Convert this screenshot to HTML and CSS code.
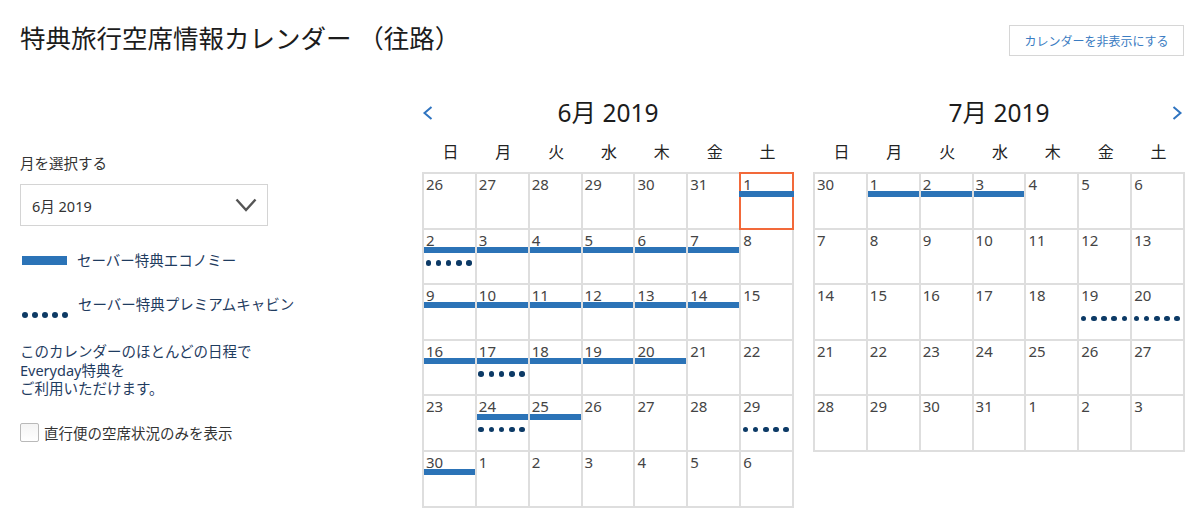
FILE: index.html
```html
<!DOCTYPE html>
<html lang="ja">
<head>
<meta charset="utf-8">
<title>特典旅行空席情報カレンダー</title>
<link rel="stylesheet" href="styles.css">
</head>
<body>
<div class="page">
  <header class="top">
    <h1 class="title">特典旅行空席情報カレンダー （往路）</h1>
    <button class="hide-btn">カレンダーを非表示にする</button>
  </header>
  <main class="main">
    <aside class="side">
      <div class="label">月を選択する</div>
      <div class="select">
        <span>6月 2019</span>
        <svg class="sel-chev" width="22" height="14" viewBox="0 0 22 14"><path d="M1.5 1.5 L11 12 L20.5 1.5" fill="none" stroke="#555" stroke-width="2.4"/></svg>
      </div>
      <div class="legend legend-eco"><i class="lg-bar"></i><span>セーバー特典エコノミー</span></div>
      <div class="legend legend-prem"><i class="lg-dots"><b></b><b></b><b></b><b></b><b></b></i><span>セーバー特典プレミアムキャビン</span></div>
      <p class="note">このカレンダーのほとんどの日程で<br>Everyday特典を<br>ご利用いただけます。</p>
      <label class="check"><i class="box"></i><span>直行便の空席状況のみを表示</span></label>
    </aside>

    <section class="cal">
      <div class="cal-head">
        <svg class="chev" width="12" height="14" viewBox="0 0 12 14"><path d="M9.5 1 L2.5 7 L9.5 13" fill="none" stroke="#2f74c0" stroke-width="2"/></svg>
        <div class="month">6月 2019</div>
        <span></span>
      </div>
      <div class="wk"><span>日</span><span>月</span><span>火</span><span>水</span><span>木</span><span>金</span><span>土</span></div>
      <div class="grid june">
        <div class="cell"><span class="num">26</span></div>
        <div class="cell"><span class="num">27</span></div>
        <div class="cell"><span class="num">28</span></div>
        <div class="cell"><span class="num">29</span></div>
        <div class="cell"><span class="num">30</span></div>
        <div class="cell"><span class="num">31</span></div>
        <div class="cell sel"><span class="num">1</span><i class="bar"></i></div>

        <div class="cell"><span class="num">2</span><i class="bar"></i><i class="dots"><b></b><b></b><b></b><b></b><b></b></i></div>
        <div class="cell"><span class="num">3</span><i class="bar"></i></div>
        <div class="cell"><span class="num">4</span><i class="bar"></i></div>
        <div class="cell"><span class="num">5</span><i class="bar"></i></div>
        <div class="cell"><span class="num">6</span><i class="bar"></i></div>
        <div class="cell"><span class="num">7</span><i class="bar"></i></div>
        <div class="cell"><span class="num">8</span></div>

        <div class="cell"><span class="num">9</span><i class="bar"></i></div>
        <div class="cell"><span class="num">10</span><i class="bar"></i></div>
        <div class="cell"><span class="num">11</span><i class="bar"></i></div>
        <div class="cell"><span class="num">12</span><i class="bar"></i></div>
        <div class="cell"><span class="num">13</span><i class="bar"></i></div>
        <div class="cell"><span class="num">14</span><i class="bar"></i></div>
        <div class="cell"><span class="num">15</span></div>

        <div class="cell"><span class="num">16</span><i class="bar"></i></div>
        <div class="cell"><span class="num">17</span><i class="bar"></i><i class="dots"><b></b><b></b><b></b><b></b><b></b></i></div>
        <div class="cell"><span class="num">18</span><i class="bar"></i></div>
        <div class="cell"><span class="num">19</span><i class="bar"></i></div>
        <div class="cell"><span class="num">20</span><i class="bar"></i></div>
        <div class="cell"><span class="num">21</span></div>
        <div class="cell"><span class="num">22</span></div>

        <div class="cell"><span class="num">23</span></div>
        <div class="cell"><span class="num">24</span><i class="bar"></i><i class="dots"><b></b><b></b><b></b><b></b><b></b></i></div>
        <div class="cell"><span class="num">25</span><i class="bar"></i></div>
        <div class="cell"><span class="num">26</span></div>
        <div class="cell"><span class="num">27</span></div>
        <div class="cell"><span class="num">28</span></div>
        <div class="cell"><span class="num">29</span><i class="bar none"></i><i class="dots"><b></b><b></b><b></b><b></b><b></b></i></div>

        <div class="cell"><span class="num">30</span><i class="bar"></i></div>
        <div class="cell"><span class="num">1</span></div>
        <div class="cell"><span class="num">2</span></div>
        <div class="cell"><span class="num">3</span></div>
        <div class="cell"><span class="num">4</span></div>
        <div class="cell"><span class="num">5</span></div>
        <div class="cell"><span class="num">6</span></div>
      </div>
    </section>

    <section class="cal">
      <div class="cal-head">
        <span></span>
        <div class="month">7月 2019</div>
        <svg class="chev chev-r" width="12" height="14" viewBox="0 0 12 14"><path d="M2.5 1 L9.5 7 L2.5 13" fill="none" stroke="#2f74c0" stroke-width="2"/></svg>
      </div>
      <div class="wk"><span>日</span><span>月</span><span>火</span><span>水</span><span>木</span><span>金</span><span>土</span></div>
      <div class="grid july">
        <div class="cell"><span class="num">30</span></div>
        <div class="cell"><span class="num">1</span><i class="bar"></i></div>
        <div class="cell"><span class="num">2</span><i class="bar"></i></div>
        <div class="cell"><span class="num">3</span><i class="bar"></i></div>
        <div class="cell"><span class="num">4</span></div>
        <div class="cell"><span class="num">5</span></div>
        <div class="cell"><span class="num">6</span></div>

        <div class="cell"><span class="num">7</span></div>
        <div class="cell"><span class="num">8</span></div>
        <div class="cell"><span class="num">9</span></div>
        <div class="cell"><span class="num">10</span></div>
        <div class="cell"><span class="num">11</span></div>
        <div class="cell"><span class="num">12</span></div>
        <div class="cell"><span class="num">13</span></div>

        <div class="cell"><span class="num">14</span></div>
        <div class="cell"><span class="num">15</span></div>
        <div class="cell"><span class="num">16</span></div>
        <div class="cell"><span class="num">17</span></div>
        <div class="cell"><span class="num">18</span></div>
        <div class="cell"><span class="num">19</span><i class="bar none"></i><i class="dots"><b></b><b></b><b></b><b></b><b></b></i></div>
        <div class="cell"><span class="num">20</span><i class="bar none"></i><i class="dots"><b></b><b></b><b></b><b></b><b></b></i></div>

        <div class="cell"><span class="num">21</span></div>
        <div class="cell"><span class="num">22</span></div>
        <div class="cell"><span class="num">23</span></div>
        <div class="cell"><span class="num">24</span></div>
        <div class="cell"><span class="num">25</span></div>
        <div class="cell"><span class="num">26</span></div>
        <div class="cell"><span class="num">27</span></div>

        <div class="cell"><span class="num">28</span></div>
        <div class="cell"><span class="num">29</span></div>
        <div class="cell"><span class="num">30</span></div>
        <div class="cell"><span class="num">31</span></div>
        <div class="cell"><span class="num">1</span></div>
        <div class="cell"><span class="num">2</span></div>
        <div class="cell"><span class="num">3</span></div>
      </div>
    </section>
  </main>
</div>
</body>
</html>
```

FILE: styles.css
```css
* { box-sizing: border-box; }
html, body { margin: 0; padding: 0; background: #fff; }
body {
  font-family: "Noto Sans", "Noto Sans CJK JP", sans-serif;
  color: #333;
  width: 1200px;
  height: 514px;
  overflow: hidden;
}
.page { padding: 20px 16px 0 20px; }

.top {
  display: flex;
  justify-content: space-between;
  align-items: flex-start;
  height: 36px;
}
.title {
  margin: 0;
  font-weight: normal;
  font-size: 25.5px;
  line-height: 36px;
  color: #1c1c1c;
}
.hide-btn {
  margin-top: 5px;
  width: 175px;
  height: 31px;
  background: #fff;
  border: 1px solid #d6d6d6;
  color: #3a7cc2;
  font-family: inherit;
  font-size: 12px;
  padding: 0;
  cursor: pointer;
}

.main {
  display: flex;
  margin-top: 39px;
}
.side {
  width: 402px;
  flex: none;
  padding-top: 57px;
}
.label {
  font-size: 14.5px;
  line-height: 22px;
  color: #333;
}
.select {
  margin-top: 10px;
  width: 248px;
  height: 42px;
  border: 1px solid #d4d4d4;
  display: flex;
  align-items: center;
  justify-content: space-between;
  padding: 0 10px 0 11px;
  font-size: 14.5px;
  color: #333;
}
.sel-chev { display: block; }

.legend {
  display: flex;
  font-size: 14.5px;
  line-height: 22px;
  color: #1f3c5f;
}
.legend span { margin-left: 10px; }
.legend-eco { margin-top: 23px; align-items: center; }
.lg-bar {
  display: block;
  margin-left: 2px;
  width: 45px;
  height: 9px;
  background: #2b73b7;
}
.legend-prem { margin-top: 22px; align-items: flex-start; }
.lg-dots {
  display: flex;
  gap: 4px;
  margin-left: 2px;
  margin-top: 19px;
}
.lg-dots b {
  display: block;
  width: 6px;
  height: 6px;
  border-radius: 50%;
  background: #0d3a64;
}
.note {
  margin: 24px 0 0;
  font-size: 14.5px;
  line-height: 18.5px;
  color: #1f3c5f;
}
.check {
  margin-top: 25px;
  display: flex;
  align-items: center;
  font-size: 14.5px;
  line-height: 20px;
  color: #333;
}
.box {
  display: block;
  width: 19px;
  height: 19px;
  border: 1px solid #b9b9b9;
  border-radius: 2px;
  background: linear-gradient(#f4f4f4, #fff);
  margin-right: 5px;
}

.cal { width: 372px; flex: none; }
.cal + .cal { margin-left: 19px; }
.cal-head {
  display: grid;
  grid-template-columns: 30px 1fr 30px;
  align-items: center;
  height: 36px;
}
.chev { display: block; margin-left: 0; }
.chev-r { justify-self: end; margin-right: 2px; }
.month {
  text-align: center;
  font-size: 24.5px;
  line-height: 36px;
  color: #1c1c1c;
}
.wk {
  margin-top: 9px;
  display: grid;
  grid-template-columns: 2px repeat(7, 1fr);
  height: 24px;
  line-height: 24px;
  font-size: 16px;
  color: #222;
  text-align: center;
}
.wk::before { content: ""; }

.grid {
  margin-top: 8px;
  display: grid;
  grid-template-columns: repeat(7, 1fr);
  grid-auto-rows: 55.6px;
  border-top: 2px solid #dedede;
  border-left: 2px solid #dedede;
}
.cell {
  border-right: 2px solid #dedede;
  border-bottom: 2px solid #dedede;
  background: #fff;
  min-width: 0;
}
.cell.sel {
  margin: -2px 0 0 -2px;
  border: 2px solid #f2693a;
  z-index: 1;
}
.cell.sel .bar { margin: 0 -2px; }
.num {
  display: block;
  height: 17.3px;
  line-height: 20px;
  padding-left: 2px;
  font-size: 15px;
  color: #444;
}
.bar {
  display: block;
  height: 6px;
  background: #2b73b7;
}
.bar.none { background: transparent; }
.dots {
  display: flex;
  gap: 4.6px;
  margin-top: 7.2px;
  padding-left: 1.5px;
}
.dots b {
  display: block;
  width: 5.6px;
  height: 5.6px;
  border-radius: 50%;
  background: #0c3a66;
}
```
